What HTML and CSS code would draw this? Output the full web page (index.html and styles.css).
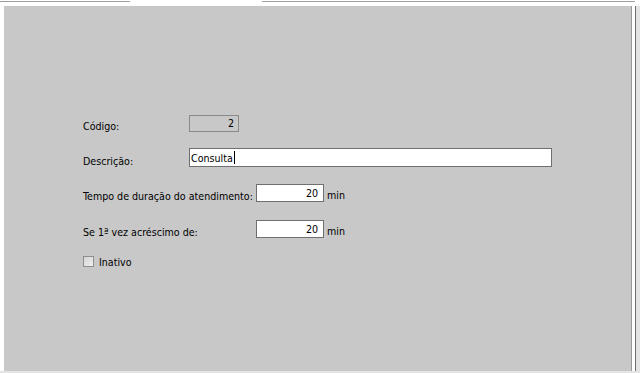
FILE: index.html
```html
<!DOCTYPE html>
<html lang="pt">
<head>
<meta charset="utf-8">
<title>Tipo de atendimento</title>
<link rel="stylesheet" href="styles.css">
</head>
<body>
<div class="frame">
  <div class="tabbar">
    <div class="tab-seg tab-seg-left"></div>
    <div class="tab-active"></div>
    <div class="tab-seg tab-seg-right"></div>
    <div class="tab-end"></div>
  </div>
  <div class="main">
    <div class="gutter"></div>
    <div class="panel">
      <div class="form">
        <div class="row row-codigo">
          <span class="label label-short">Código:</span>
          <div class="field field-disabled field-codigo"><span class="num">2</span></div>
        </div>
        <div class="row row-desc">
          <span class="label label-short">Descrição:</span>
          <div class="field field-desc"><span class="txt">Consulta</span><span class="caret"></span></div>
        </div>
        <div class="row row-tempo">
          <span class="label label-long">Tempo de duração do atendimento:</span>
          <div class="field field-num"><span class="num">20</span></div>
          <span class="unit">min</span>
        </div>
        <div class="row row-se">
          <span class="label label-long">Se 1ª vez acréscimo de:</span>
          <div class="field field-num"><span class="num">20</span></div>
          <span class="unit">min</span>
        </div>
        <div class="row row-check">
          <span class="checkbox"></span>
          <span class="check-label">Inativo</span>
        </div>
      </div>
    </div>
    <div class="edge edge-white"></div>
    <div class="edge edge-dark"></div>
    <div class="edge edge-light"></div>
  </div>
  <div class="bottom"></div>
</div>
</body>
</html>
```
FILE: styles.css
```css
html, body {
  margin: 0;
  padding: 0;
  background: #ffffff;
}
body {
  font-family: "DejaVu Sans Condensed", "DejaVu Sans", sans-serif;
  font-size: 10.6px;
  color: #000000;
}
.frame {
  width: 640px;
  height: 373px;
  display: flex;
  flex-direction: column;
  overflow: hidden;
}
.tabbar {
  height: 6px;
  display: flex;
  flex: none;
}
.tab-seg {
  margin-top: 1px;
  height: 1px;
  background: #a0a0a0;
}
.tab-seg-left { width: 130px; }
.tab-active { width: 132px; }
.tab-seg-right { width: 373px; }
.tab-end { flex: 1; }
.main {
  flex: 1;
  display: flex;
  min-height: 0;
}
.gutter {
  width: 4px;
  background: #ffffff;
}
.panel {
  width: 628px;
  background: #c8c8c8;
  border-right: 1px solid #9a9a9a;
  box-sizing: border-box;
  padding: 108px 0 0 79px;
}
.edge-white { width: 3px; background: #ffffff; }
.edge-dark { width: 1px; background: #6e6e6e; }
.edge-light { flex: 1; background: #e4e4e4; }
.bottom {
  height: 2px;
  background: #e4e4e4;
  flex: none;
}
.form {
  display: flex;
  flex-direction: column;
}
.row {
  display: flex;
  align-items: center;
}
.row-codigo { height: 18px; }
.row-desc { margin-top: 16px; height: 19px; }
.row-tempo { margin-top: 17px; height: 18px; }
.row-se { margin-top: 18px; height: 18px; }
.row-check { margin-top: 18px; height: 11px; }
.label {
  flex: none;
  white-space: nowrap;
  padding-top: 6px;
}
.label-short { width: 106px; }
.label-long { width: 173px; }
.field {
  height: 18px;
  box-sizing: border-box;
  border: 1px solid #6f6f6f;
  background: #ffffff;
  display: flex;
  align-items: center;
  padding: 0 2px;
}
.field-disabled {
  background: #c8c8c8;
  border-color: #8a8a8a;
}
.field-codigo {
  width: 50px;
  height: 17px;
  justify-content: flex-end;
  padding-right: 4px;
}
.field-desc {
  width: 363px;
  height: 19px;
  padding-left: 1px;
}
.field-num {
  width: 68px;
  justify-content: flex-end;
  padding-right: 5px;
}
.caret {
  width: 1px;
  height: 13px;
  background: #000000;
  margin-left: 1px;
}
.unit { margin-left: 3px; padding-top: 4px; }
.checkbox {
  width: 11px;
  height: 11px;
  box-sizing: border-box;
  border: 1px solid #8e8e8e;
  background: linear-gradient(135deg, #d4d4d4, #f0f0f0);
}
.check-label { margin-left: 5px; }
```
